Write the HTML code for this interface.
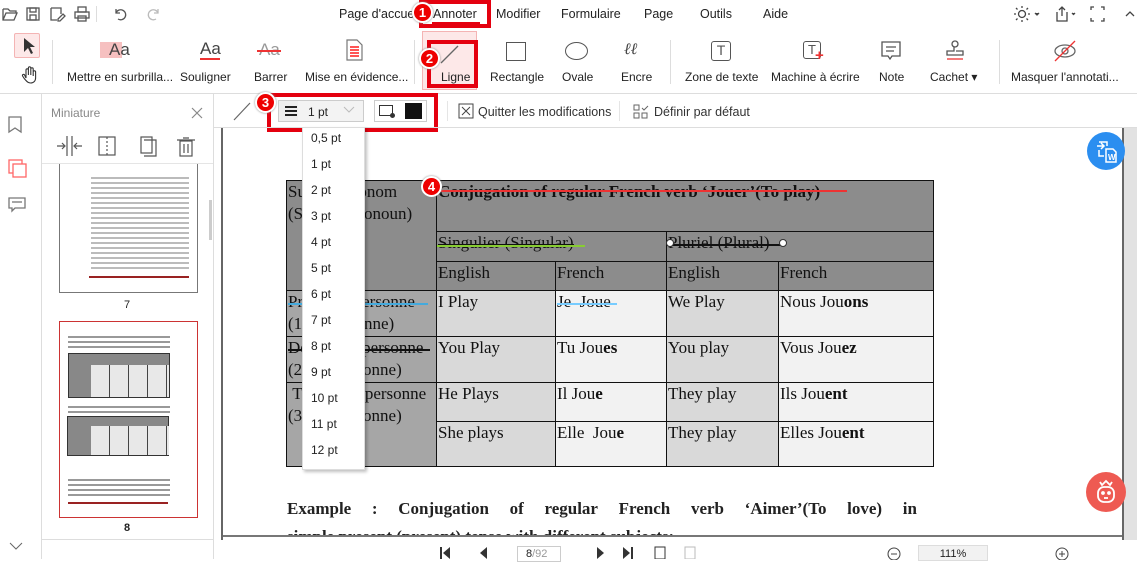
<!DOCTYPE html><html><head><meta charset="utf-8"><style>
*{box-sizing:border-box;margin:0;padding:0}
body{width:1137px;height:559px;overflow:hidden;background:#fff;font-family:"Liberation Sans",sans-serif;font-size:12px;color:#222;position:relative}
.a{position:absolute}
.menu{top:7px;font-size:12.5px;color:#222}
.tl{top:70px;font-size:12px;color:#222;white-space:nowrap}
.badge{position:absolute;width:21px;height:21px;border-radius:50%;background:#e00;border:2px solid #fff;color:#fff;font-weight:bold;font-size:13px;text-align:center;line-height:17px;box-shadow:0 0 2px #888}
.rb{position:absolute;border:4px solid #e4000f}
table{border-collapse:collapse;font-family:"Liberation Serif",serif;font-size:17px;color:#111}
td{border:1px solid #111;vertical-align:top;padding:0 1px;line-height:22px}
.g1{background:#8c8c8c}.g2{background:#a6a6a6}.e{background:#d9d9d9}.f{background:#f2f2f2}
.dd div{height:26px;line-height:18px;padding-left:8px;font-size:12px;color:#222}
.st{position:absolute;height:1.5px;background:#111}
</style></head><body>
<svg class="a" style="left:0;top:4px" width="170" height="20" fill="none" stroke="#555" stroke-width="1.3">
<path d="M3 5h5l2 2h6v2M3 5v11h11l3-7H6l-3 7"/>
<rect x="27" y="4" width="12" height="12"/><rect x="30" y="4" width="6" height="4"/><rect x="30" y="11" width="6" height="5"/>
<path d="M51 4h10v6M51 4v12h6M58 15l5-5 2 2-5 5h-2z"/>
<rect x="75" y="8" width="14" height="6"/><rect x="78" y="3" width="8" height="5"/><rect x="78" y="12" width="8" height="5"/>
<path d="M116 9a5 5 0 1 1 2 6M116 5v4h4" /><path d="M158 9a5 5 0 1 0-2 6M158 5v4h-4" stroke="#bbb"/>
</svg>
<div class="a" style="left:96px;top:6px;width:1px;height:16px;background:#ddd"></div>
<div class="a menu" style="left:339px">Page d'accueil</div>
<div class="a menu" style="left:433px">Annoter</div>
<div class="a" style="left:432px;top:22px;width:48px;height:2px;background:#e4000f"></div>
<div class="rb" style="left:419px;top:0;width:72px;height:28px"></div>
<div class="badge" style="left:412px;top:2px">1</div>
<div class="a menu" style="left:496px">Modifier</div>
<div class="a menu" style="left:561px">Formulaire</div>
<div class="a menu" style="left:644px">Page</div>
<div class="a menu" style="left:700px">Outils</div>
<div class="a menu" style="left:763px">Aide</div>
<svg class="a" style="left:1010px;top:4px" width="127" height="20" fill="none" stroke="#444" stroke-width="1.3">
<circle cx="12" cy="10" r="3.5"/><path d="M12 2v2M12 16v2M4 10h2M18 10h2M6 4l1.5 1.5M16.5 14.5 18 16M6 16l1.5-1.5M16.5 5.5 18 4"/>
<path d="M25 9l2 2 2-2" fill="#444"/>
<path d="M47 8v9h10V8M52 12V3M49 6l3-3 3 3"/><path d="M62 9l1.5 1.5L65 9" fill="#444"/>
<path d="M84 3h-3v3M91 3h3v3M84 17h-3v-3M91 17h3v-3"/>
<path d="M116 12l4-4 4 4"/>
</svg>
<div class="a" style="left:14px;top:33px;width:26px;height:25px;background:#fde8e8;border:1px solid #f4b4b4;border-radius:2px"></div>
<svg class="a" style="left:18px;top:34px" width="20" height="50"><path d="M6 4v14l4-4 3 6 2-1-3-6h5z" fill="#333"/><path d="M8 44v-8a1.2 1.2 0 0 1 2.4 0v5-7a1.2 1.2 0 0 1 2.4 0v7-6a1.2 1.2 0 0 1 2.4 0v7-4a1.2 1.2 0 0 1 2.4 0v6c0 3-2 5-5 5s-4-2-6-4l-2-3a1 1 0 0 1 2-1z" fill="none" stroke="#333" stroke-width="1.1"/></svg>
<div class="a" style="left:52px;top:40px;width:1px;height:44px;background:#ddd"></div>
<div class="a" style="left:100px;top:42px;width:22px;height:16px;background:#f6c0c0"></div>
<div class="a" style="left:109px;top:40px;font-size:17px;color:#444">Aa</div>
<div class="a" style="left:200px;top:39px;font-size:17px;color:#444">Aa</div><div class="a" style="left:200px;top:58px;width:20px;height:2px;background:#e33"></div>
<div class="a" style="left:259px;top:40px;font-size:17px;color:#999">Aa</div><div class="a" style="left:257px;top:50px;width:24px;height:1.5px;background:#e33"></div>
<svg class="a" style="left:344px;top:38px" width="22" height="24" fill="none" stroke="#777" stroke-width="1.2"><path d="M3 2h10l5 5v15H3z"/><path d="M6 9h9M6 12h9M6 15h9M6 18h9" stroke="#f55" stroke-width="2"/></svg>
<div class="a tl" style="left:67px">Mettre en surbrilla...</div>
<div class="a tl" style="left:180px">Souligner</div>
<div class="a tl" style="left:254px">Barrer</div>
<div class="a tl" style="left:305px">Mise en évidence...</div>
<div class="a" style="left:414px;top:40px;width:1px;height:44px;background:#ddd"></div>
<div class="a" style="left:422px;top:31px;width:55px;height:59px;background:#fde8e8;border:1px solid #f4b4b4"></div>
<svg class="a" style="left:438px;top:42px" width="24" height="24"><path d="M3 21 20 4" stroke="#666" stroke-width="1.3"/></svg>
<div class="a tl" style="left:441px">Ligne</div>
<div class="rb" style="left:427px;top:40px;width:51px;height:48px"></div>
<div class="badge" style="left:419px;top:48px">2</div>
<div class="a" style="left:506px;top:42px;width:20px;height:19px;border:1.4px solid #555"></div>
<div class="a tl" style="left:490px">Rectangle</div>
<div class="a" style="left:565px;top:42px;width:23px;height:18px;border:1.4px solid #555;border-radius:50%"></div>
<div class="a tl" style="left:562px">Ovale</div>
<div class="a" style="left:624px;top:41px;font-size:16px;color:#444;font-style:italic;font-family:'Liberation Serif',serif">&#8467;&#8467;</div>
<div class="a tl" style="left:621px">Encre</div>
<div class="a" style="left:670px;top:40px;width:1px;height:44px;background:#ddd"></div>
<div class="a" style="left:711px;top:41px;width:20px;height:20px;border:1.5px solid #555;border-radius:3px;text-align:center;font-size:14px;line-height:17px;color:#555">T</div>
<div class="a tl" style="left:685px">Zone de texte</div>
<div class="a" style="left:803px;top:41px;width:18px;height:18px;border:1.5px solid #555;border-radius:3px;text-align:center;font-size:13px;line-height:15px;color:#555">T</div>
<div class="a" style="left:815px;top:50px;color:#e33;font-size:15px;font-weight:bold;line-height:12px">+</div>
<div class="a tl" style="left:771px">Machine à écrire</div>
<svg class="a" style="left:880px;top:40px" width="24" height="22" fill="none" stroke="#555" stroke-width="1.3"><path d="M2 2h18v14h-8l-2 3-2-3H2z"/><path d="M6 7h10M6 11h8"/></svg>
<div class="a tl" style="left:879px">Note</div>
<svg class="a" style="left:944px;top:40px" width="22" height="22" fill="none" stroke="#555" stroke-width="1.3"><circle cx="11" cy="4" r="3"/><path d="M10 7v4h-7v4h16v-4h-7"/><path d="M3 19h16" stroke="#e33"/></svg>
<div class="a tl" style="left:930px">Cachet &#9662;</div>
<div class="a" style="left:999px;top:40px;width:1px;height:44px;background:#ddd"></div>
<svg class="a" style="left:1052px;top:40px" width="26" height="22" fill="none" stroke="#666" stroke-width="1.3"><ellipse cx="13" cy="11" rx="10" ry="6"/><circle cx="13" cy="11" r="3"/><path d="M3 21 23 1" stroke="#e33"/></svg>
<div class="a tl" style="left:1011px">Masquer l'annotati...</div>
<div class="a" style="left:0;top:93px;width:1137px;height:1px;background:#ddd"></div>
<div class="a" style="left:41px;top:94px;width:1px;height:465px;background:#ddd"></div>
<svg class="a" style="left:5px;top:114px" width="24" height="110" fill="none" stroke="#777" stroke-width="1.3"><path d="M4 3h12v15l-6-4-6 4z"/><rect x="4" y="46" width="13" height="13" stroke="#f66"/><rect x="8" y="50" width="13" height="13" stroke="#f66" fill="#fff"/><path d="M4 84h16v10h-10l-3 3v-3H4z"/><path d="M7 88h10"/></svg>
<svg class="a" style="left:8px;top:540px" width="16" height="12"><path d="M2 3l6 6 6-6" fill="none" stroke="#666"/></svg>
<div class="a" style="left:51px;top:106px;color:#888;font-size:12px">Miniature</div>
<svg class="a" style="left:190px;top:106px" width="14" height="14"><path d="M2 2 12 12M12 2 2 12" stroke="#888" stroke-width="1.2"/></svg>
<svg class="a" style="left:55px;top:134px" width="150" height="24" fill="none" stroke="#555" stroke-width="1.2"><path d="M12 2v20M17 2v20M2 12h7M7 9l3 3-3 3M27 12h-7M22 9l-3 3 3 3"/><rect x="44" y="3" width="16" height="18"/><path d="M52 3v18" stroke-dasharray="2 2"/><rect x="86" y="3" width="11" height="16"/><path d="M89 6h12v16H89" /><rect x="125" y="7" width="12" height="15"/><path d="M122 6h18M128 4h6M129 10v9M133 10v9"/></svg>
<div class="a" style="left:42px;top:163px;width:171px;height:1px;background:#e5e5e5"></div>
<div class="a" style="left:59px;top:164px;width:139px;height:129px;border:1px solid #777;border-top:none;background:#fff"></div>
<div class="a" style="left:91px;top:174px;width:98px;height:95px;background:repeating-linear-gradient(#fff 0 3px,#bbb 3px 5px)"></div>
<div class="a" style="left:89px;top:276px;width:100px;height:2px;background:#922"></div>
<div class="a" style="left:124px;top:299px;font-size:11px">7</div>
<div class="a" style="left:59px;top:321px;width:139px;height:197px;border:1px solid #c33;background:#fff"></div>
<div class="a" style="left:68px;top:333px;width:102px;height:16px;background:repeating-linear-gradient(#fff 0 3px,#999 3px 5px)"></div>
<div class="a" style="left:68px;top:353px;width:102px;height:45px;background:#888;border:1px solid #333"></div>
<div class="a" style="left:91px;top:365px;width:78px;height:32px;background:repeating-linear-gradient(90deg,#e8e8e8 0 18px,#444 18px 19px)"></div>
<div class="a" style="left:68px;top:403px;width:102px;height:10px;background:repeating-linear-gradient(#fff 0 3px,#999 3px 5px)"></div>
<div class="a" style="left:67px;top:416px;width:102px;height:40px;background:#888;border:1px solid #333"></div>
<div class="a" style="left:91px;top:426px;width:78px;height:29px;background:repeating-linear-gradient(90deg,#e8e8e8 0 18px,#444 18px 19px)"></div>
<div class="a" style="left:68px;top:476px;width:102px;height:20px;background:repeating-linear-gradient(#fff 0 3px,#999 3px 5px)"></div>
<div class="a" style="left:68px;top:502px;width:100px;height:2px;background:#922"></div>
<div class="a" style="left:124px;top:522px;font-size:11px;font-weight:bold">8</div>
<div class="a" style="left:209px;top:200px;width:3px;height:40px;background:#ccc"></div>
<div class="a" style="left:213px;top:94px;width:1px;height:465px;background:#ddd"></div>
<div class="a" style="left:42px;top:539px;width:171px;height:1px;background:#ddd"></div>
<svg class="a" style="left:232px;top:100px" width="20" height="22"><path d="M2 20 18 3" stroke="#666" stroke-width="1.2"/></svg>
<div class="a" style="left:278px;top:100px;width:86px;height:22px;border:1px solid #ccc;background:#eee"></div>
<div class="a" style="left:298px;top:101px;width:65px;height:20px;background:#f3f3f3"></div>
<svg class="a" style="left:284px;top:104px" width="14" height="14"><path d="M1 3h12M1 7h12M1 11h12" stroke="#222" stroke-width="2"/></svg>
<div class="a" style="left:308px;top:105px;font-size:12px">1 pt</div>
<svg class="a" style="left:343px;top:106px" width="12" height="8"><path d="M1 1l5 5 5-5" fill="none" stroke="#bbb"/></svg>
<div class="a" style="left:374px;top:100px;width:53px;height:22px;border:1px solid #ccc"></div>
<div class="a" style="left:379px;top:105px;width:14px;height:11px;border:1.3px solid #333"></div>
<div class="a" style="left:390px;top:113px;width:5px;height:5px;border-radius:50%;background:#333"></div>
<div class="a" style="left:405px;top:103px;width:17px;height:16px;background:#111"></div>
<div class="rb" style="left:267px;top:93px;width:171px;height:39px"></div>
<div class="badge" style="left:255px;top:92px">3</div>
<div class="a" style="left:447px;top:101px;width:1px;height:20px;background:#e5e5e5"></div>
<svg class="a" style="left:458px;top:103px" width="16" height="16"><rect x="1" y="1" width="14" height="14" fill="none" stroke="#444"/><path d="M4 4l8 8M12 4l-8 8" stroke="#444"/></svg>
<div class="a" style="left:478px;top:105px;font-size:12.5px;color:#333">Quitter les modifications</div>
<div class="a" style="left:619px;top:101px;width:1px;height:20px;background:#e5e5e5"></div>
<svg class="a" style="left:633px;top:104px" width="16" height="16" fill="none" stroke="#666"><rect x="1" y="1" width="5" height="5"/><rect x="1" y="9" width="5" height="5"/><rect x="9" y="9" width="5" height="5"/><path d="M9 4l2 2 4-4"/></svg>
<div class="a" style="left:654px;top:105px;font-size:12.5px;color:#333">Définir par défaut</div>
<div class="a" style="left:214px;top:127px;width:923px;height:1px;background:#ddd"></div>
<div class="a" style="left:1122px;top:128px;width:15px;height:412px;background:#e2e2e2;border-left:2px solid #666"></div>
<div class="a" style="left:221px;top:128px;width:2px;height:412px;background:#666"></div>
<div class="a" style="left:223px;top:535px;width:899px;height:2px;background:#777"></div>
<table class="a" style="left:286px;top:180px;width:648px">
<tr style="height:51px"><td class="g1" rowspan="3" style="width:150px">Subject Pronom<br>(Subject Pronoun)</td><td class="g1" colspan="4" style="font-weight:bold;position:relative">Conjugation of regular French verb ‘Jouer’(To play)<div class="a" style="left:0;top:9px;width:410px;height:2px;background:#e33"></div></td></tr>
<tr style="height:30px"><td class="g1" colspan="2" style="position:relative">Singulier (Singular)<div class="st" style="left:1px;top:12px;width:136px"></div><div class="a" style="left:0;top:13px;width:148px;height:2px;background:#8c3"></div></td><td class="g1" colspan="2" style="position:relative">Pluriel (Plural)<div class="st" style="left:1px;top:12px;width:112px"></div><div class="a" style="left:-1px;top:7px;width:8px;height:8px;border-radius:50%;background:#fff;border:1px solid #333"></div><div class="a" style="left:112px;top:7px;width:8px;height:8px;border-radius:50%;background:#fff;border:1px solid #333"></div></td></tr>
<tr style="height:29px"><td class="g1" style="width:119px">English</td><td class="g1" style="width:111px">French</td><td class="g1" style="width:112px">English</td><td class="g1">French</td></tr>
<tr style="height:46px"><td class="g2" style="position:relative">Première personne<br>(1ère personne)<div class="st" style="left:1px;top:12px;width:140px;background:#4ad"></div></td><td class="e">I Play</td><td class="f" style="position:relative">Je &nbsp;Joue<div class="st" style="left:1px;top:12px;width:60px;background:#7cf"></div></td><td class="e">We Play</td><td class="f">Nous Jou<b>ons</b></td></tr>
<tr style="height:46px"><td class="g2" style="position:relative">Deuxième personne<br>(2ème personne)<div class="st" style="left:1px;top:12px;width:142px"></div></td><td class="e">You Play</td><td class="f">Tu Jou<b>es</b></td><td class="e">You play</td><td class="f">Vous Jou<b>ez</b></td></tr>
<tr style="height:39px"><td class="g2" rowspan="2">&nbsp;Troisième personne<br>(3ème personne)</td><td class="e">He Plays</td><td class="f">Il Jou<b>e</b></td><td class="e">They play</td><td class="f">Ils Jou<b>ent</b></td></tr>
<tr style="height:45px"><td class="e">She plays</td><td class="f">Elle &nbsp;Jou<b>e</b></td><td class="e">They play</td><td class="f">Elles Jou<b>ent</b></td></tr>
</table>
<div class="badge" style="left:421px;top:176px">4</div>
<div class="a" style="left:287px;top:499px;width:630px;font-family:'Liberation Serif',serif;font-weight:bold;font-size:17px;display:flex;justify-content:space-between"><span>Example</span><span>:</span><span>Conjugation</span><span>of</span><span>regular</span><span>French</span><span>verb</span><span>‘Aimer’(To</span><span>love)</span><span>in</span></div>
<div class="a" style="left:287px;top:528px;font-family:'Liberation Serif',serif;font-weight:bold;font-size:17px;height:7px;overflow:hidden;line-height:18px">simple present (present) tense with different subjects:</div>
<div class="a dd" style="left:302px;top:127px;width:63px;height:343px;background:#fff;border:1px solid #ddd;box-shadow:2px 2px 3px rgba(0,0,0,.25);padding-top:1px">
<div>0,5 pt</div><div>1 pt</div><div>2 pt</div><div>3 pt</div><div>4 pt</div><div>5 pt</div><div>6 pt</div><div>7 pt</div><div>8 pt</div><div>9 pt</div><div>10 pt</div><div>11 pt</div><div>12 pt</div></div>
<div class="a" style="left:1087px;top:132px;width:38px;height:38px;border-radius:50%;background:#2b8ef0"></div>
<svg class="a" style="left:1093px;top:138px" width="28" height="28" fill="none" stroke="#fff" stroke-width="1.5"><path d="M4 8h7M8 5l3 3-3 3M6 4h8v4M6 12v6h5"/><path d="M13 11h7l3 3v10H13z"/><text x="15" y="22" fill="#fff" stroke="none" font-size="8" font-weight="bold" font-family="Liberation Sans">W</text></svg>
<div class="a" style="left:1086px;top:472px;width:40px;height:40px;border-radius:50%;background:#ee5a52"></div>
<svg class="a" style="left:1094px;top:478px" width="24" height="28" fill="none" stroke="#fff" stroke-width="1.8"><path d="M6 4l2 3 4-4 4 4 2-3"/><rect x="4" y="9" width="16" height="15" rx="6"/><circle cx="9" cy="15" r="1" fill="#fff"/><circle cx="15" cy="15" r="1" fill="#fff"/><path d="M10 20h4"/></svg>
<svg class="a" style="left:440px;top:546px" width="260" height="13" fill="#333"><rect x="0" y="1" width="2" height="12"/><path d="M3 7l7-6v12z"/><path d="M40 7l7-6v12z"/><path d="M157 1l7 6-7 6z"/><path d="M183 1l7 6-7 6z"/><rect x="191" y="1" width="2" height="12"/><rect x="215" y="1" width="10" height="12" fill="none" stroke="#333"/><rect x="245" y="1" width="10" height="12" fill="none" stroke="#bbb"/></svg>
<div class="a" style="left:517px;top:546px;width:44px;height:16px;border:1px solid #ccc;font-size:11px;padding-left:8px;line-height:15px">8<span style="color:#999">/92</span></div>
<svg class="a" style="left:887px;top:546px" width="14" height="14"><circle cx="7" cy="8" r="6" fill="none" stroke="#444"/><path d="M4 8h6" stroke="#444"/></svg>
<div class="a" style="left:918px;top:545px;width:70px;height:16px;background:#f2f2f2;border:1px solid #ddd;font-size:11px;text-align:center;line-height:16px">111%</div>
<svg class="a" style="left:1055px;top:546px" width="14" height="14"><circle cx="7" cy="8" r="6" fill="none" stroke="#444"/><path d="M4 8h6M7 5v6" stroke="#444"/></svg>
</body></html>
